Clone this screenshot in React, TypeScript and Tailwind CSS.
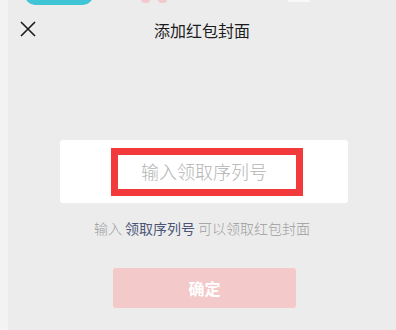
import React from 'react';

const font = { fontFamily: '"Noto Sans CJK SC", "Noto Sans", sans-serif' };

export default function App() {
  return (
    <div className="flex h-[330px] w-[396px] overflow-hidden bg-[#ececec]" style={font}>
      <div className="h-full w-[8px] shrink-0 bg-[#f3f3f3]" />
      <div className="relative flex flex-1 flex-col">
        {/* bits of the page behind, peeking at the top */}
        <div className="absolute left-[17px] top-[-20px] h-[25px] w-[68px] rounded-[10px] bg-[#3fc5d6]" />
        <div className="absolute left-[133px] top-[-4px] h-[7px] w-[9px] rounded-full bg-[#f2c9cc]" />
        <div className="absolute left-[150px] top-[-4px] h-[7px] w-[9px] rounded-full bg-[#f2c9cc]" />
        <div className="absolute left-[280px] top-0 h-[2px] w-[22px] bg-[#f8f8f8]" />

        <div className="flex h-[60px] items-center">
          <svg className="ml-[12px] mt-[-2px]" width="16" height="16" viewBox="0 0 16 16">
            <path d="M1 1 L15 15 M15 1 L1 15" stroke="#1a1a1a" strokeWidth="1.6" fill="none" />
          </svg>
          <div className="mr-[28px] flex-1 text-center text-[16px] text-[#1c1c1c]">添加红包封面</div>
        </div>

        <div className="ml-[52px] mt-[80px] flex h-[63px] w-[288px] items-center rounded-[3px] bg-white">
          <div className="ml-[51px] flex h-[48px] w-[192px] items-center justify-center border-[7px] border-[#f23a3c] pr-[6px] text-[18px] font-light text-[#b3b3b3]">
            输入领取序列号
          </div>
        </div>

        <div className="mt-[15px] text-center text-[14px] font-light text-[#9c9c9c]">
          输入 <span className="font-normal text-[#4b5676]">领取序列号</span> 可以领取红包封面
        </div>

        <div className="ml-[105px] mt-[29px] flex h-[40px] w-[183px] items-center justify-center rounded-[3px] bg-[#f4c9ca] text-[16px] font-bold text-white">
          确定
        </div>
      </div>
    </div>
  );
}
